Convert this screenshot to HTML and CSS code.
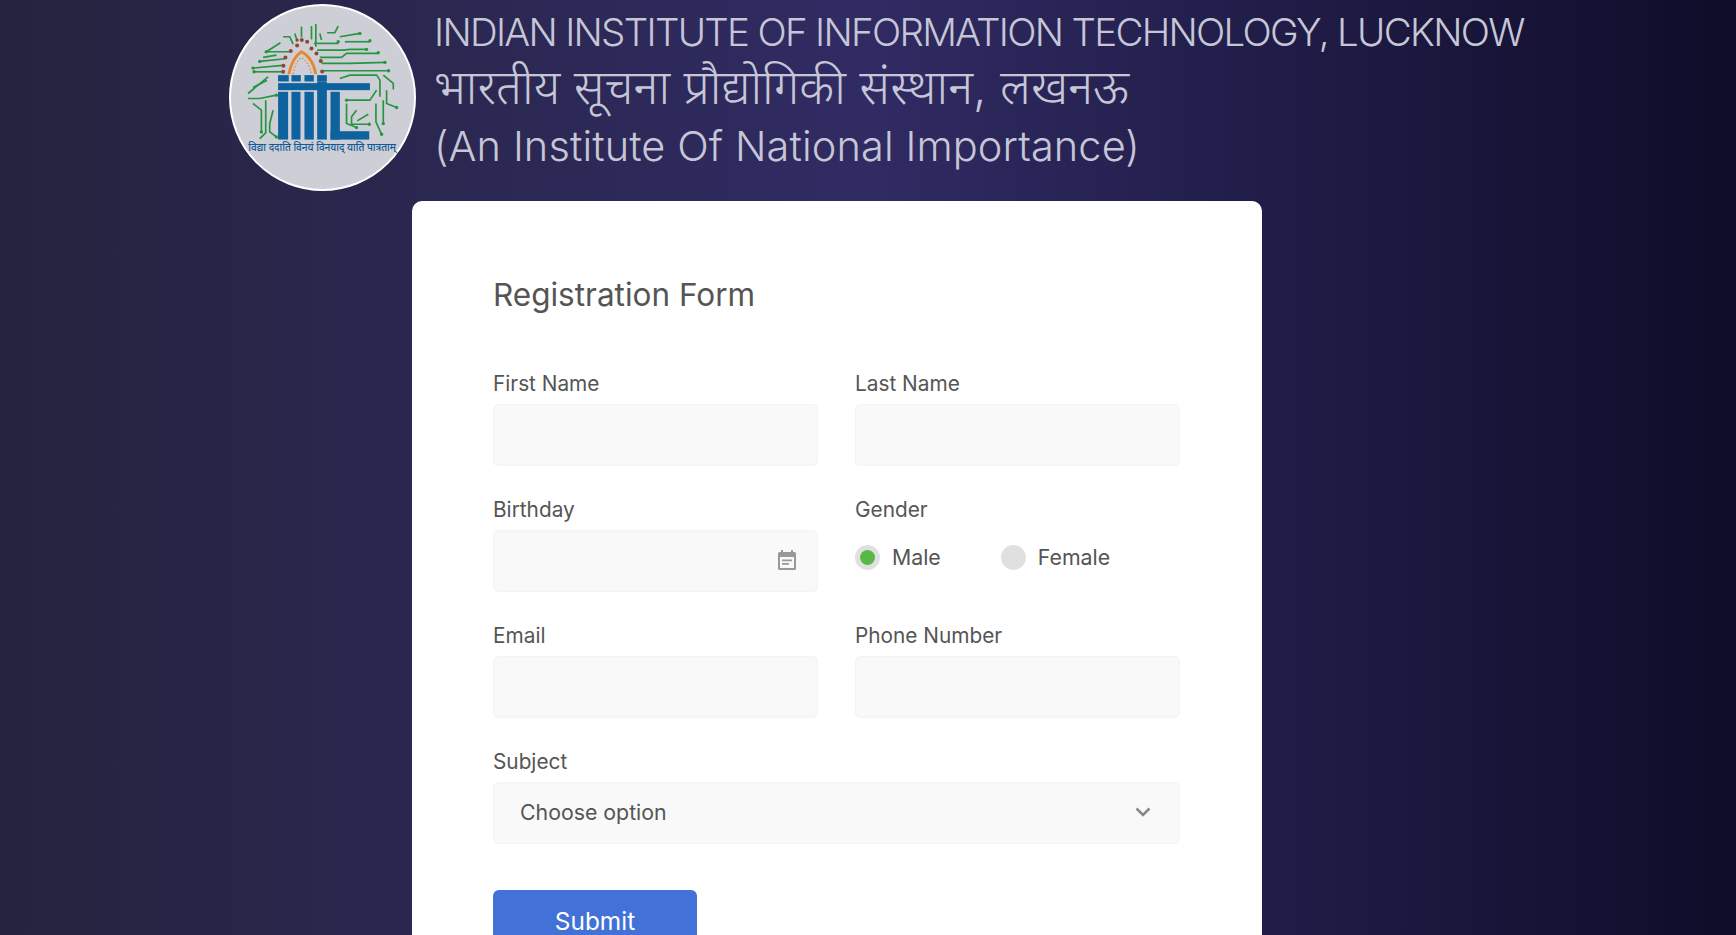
FILE: index.html
```html
<!DOCTYPE html>
<html lang="en">
<head>
    <meta charset="UTF-8">
    <meta name="viewport" content="width=device-width, initial-scale=1.0">
    <title>Registration Form</title>
    <link rel="stylesheet" href="styles.css">
</head>
<body>
    <header class="header">
        <svg class="logo" viewBox="58 12 560 560" aria-label="IIIT Lucknow logo">
            <circle cx="338" cy="292" r="277" fill="#cdced6" stroke="#fff" stroke-width="6"/>
            <!-- circuit traces -->
            <g class="traces">
                <path d="M340 212H536"/>
                <path d="M335 190H420L525 187"/>
                <path d="M330 172H395L410 160H505"/>
                <path d="M322 150H400L420 148H470"/>
                <path d="M312 130H385"/>
                <path d="M405 125H480"/>
                <path d="M390 110L450 100"/>
                <path d="M318 72V140"/>
                <path d="M330 100L335 120"/>
                <path d="M352 98H375L385 78"/>
                <path d="M220 215H133"/>
                <path d="M218 196L130 204"/>
                <path d="M226 176L150 184"/>
                <path d="M240 155H170L212 128"/>
                <path d="M200 165L160 172"/>
                <path d="M250 132L240 110H220"/>
                <path d="M275 80V112"/>
                <path d="M255 100L262 122"/>
                <path d="M305 78V118"/>
                <path d="M115 295H150L200 285"/>
                <path d="M115 280L175 230"/>
                <path d="M130 262L172 240"/>
                <path d="M130 310L155 330V395"/>
                <path d="M168 300V398L150 415"/>
                <path d="M190 330L180 370V395L200 410"/>
                <path d="M390 235L420 225H500L510 240V290"/>
                <path d="M520 225L550 250V268"/>
                <path d="M530 270V310L560 322"/>
                <path d="M410 300H480L500 270"/>
                <path d="M410 310V370L440 382"/>
                <path d="M440 330L425 350V372H478"/>
                <path d="M442 362L475 342"/>
                <path d="M498 310V365L515 402"/>
                <path d="M520 300V370"/>
            </g>
            <!-- trace end points -->
            <g class="trace-ends">
                <circle cx="536" cy="212" r="5"/><circle cx="525" cy="187" r="5"/><circle cx="505" cy="158" r="5"/>
                <circle cx="470" cy="148" r="5"/><circle cx="385" cy="125" r="5"/><circle cx="480" cy="122" r="5"/>
                <circle cx="450" cy="100" r="5"/><circle cx="133" cy="215" r="5"/><circle cx="130" cy="204" r="5"/>
                <circle cx="150" cy="184" r="5"/><circle cx="170" cy="155" r="5"/><circle cx="200" cy="285" r="5"/>
                <circle cx="155" cy="395" r="5"/><circle cx="200" cy="410" r="5"/><circle cx="440" cy="382" r="5"/>
                <circle cx="478" cy="372" r="5"/><circle cx="515" cy="402" r="5"/><circle cx="560" cy="322" r="5"/>
                <circle cx="410" cy="300" r="5"/><circle cx="520" cy="370" r="5"/>
            </g>
            <!-- arch -->
            <path d="M237 222C245 185 258 165 275 155C295 165 312 190 318 222" fill="none" stroke="#e8862c" stroke-width="8"/>
            <path d="M250 222C254 195 262 182 275 172C290 182 300 198 305 222" fill="none" stroke="#e8862c" stroke-width="4" stroke-dasharray="4 6"/>
            <g class="arch-dots">
                <circle cx="220" cy="215" r="6"/><circle cx="221" cy="197" r="6"/><circle cx="227" cy="172" r="6"/>
                <circle cx="243" cy="153" r="6"/><circle cx="262" cy="136" r="6"/><circle cx="276" cy="120" r="6"/>
                <circle cx="292" cy="125" r="6"/><circle cx="305" cy="145" r="6"/><circle cx="320" cy="160" r="6"/>
                <circle cx="333" cy="183" r="6"/><circle cx="337" cy="214" r="6"/><circle cx="262" cy="120" r="5"/>
            </g>
            <!-- iiitl letters -->
            <g class="letters">
                <rect x="205" y="225" width="32" height="19"/>
                <rect x="245" y="225" width="28" height="19"/>
                <rect x="284" y="225" width="28" height="19"/>
                <rect x="322" y="225" width="29" height="19"/>
                <rect x="205" y="249" width="275" height="21"/>
                <rect x="205" y="275" width="30" height="143"/>
                <rect x="245" y="275" width="27" height="143"/>
                <rect x="284" y="275" width="28" height="143"/>
                <rect x="322" y="244" width="29" height="174"/>
                <rect x="362" y="275" width="28" height="143"/>
                <rect x="362" y="393" width="116" height="25"/>
            </g>
            <text class="motto" x="116" y="452" textLength="442" lengthAdjust="spacingAndGlyphs">विद्या ददाति विनयं विनयाद् याति पात्रताम्</text>
        </svg>
        <div class="institute">
            <div class="line-en">INDIAN INSTITUTE OF INFORMATION TECHNOLOGY, LUCKNOW</div>
            <div class="line-hi">भारतीय सूचना प्रौद्योगिकी संस्थान, लखनऊ</div>
            <div class="line-sub">(An Institute Of National Importance)</div>
        </div>
    </header>

    <main class="card">
        <h2 class="card-title">Registration Form</h2>
        <form class="form-grid">
            <div class="form-group">
                <label for="firstName">First Name</label>
                <input type="text" id="firstName">
            </div>
            <div class="form-group">
                <label for="lastName">Last Name</label>
                <input type="text" id="lastName">
            </div>
            <div class="form-group">
                <label for="birthday">Birthday</label>
                <div class="date-field">
                    <input type="text" id="birthday">
                    <svg class="calendar" viewBox="0 0 18 20">
                        <path d="M3 0h2v2h8V0h2v2h1.500A1.500 1.500 0 0 1 18 3.500v15a1.500 1.500 0 0 1-1.500 1.500h-15A1.500 1.500 0 0 1 0 18.500v-15A1.500 1.500 0 0 1 1.500 2H3zM2 7v11h14V7zm2 2.500h10v1.700H4zm0 3.500h7v1.700H4z" fill-rule="evenodd"/>
                    </svg>
                </div>
            </div>
            <div class="form-group">
                <span class="label">Gender</span>
                <div class="radios">
                    <span class="radio-item"><span class="radio checked"></span>Male</span>
                    <span class="radio-item"><span class="radio"></span>Female</span>
                </div>
            </div>
            <div class="form-group">
                <label for="email">Email</label>
                <input type="text" id="email">
            </div>
            <div class="form-group">
                <label for="phone">Phone Number</label>
                <input type="text" id="phone">
            </div>
            <div class="form-group full">
                <label for="subject">Subject</label>
                <div class="select-field" id="subject">
                    Choose option
                    <svg class="chevron" viewBox="0 0 16 10"><path d="M1.500 1.500L8 8l6.500-6.500"/></svg>
                </div>
            </div>
            <div class="full">
                <button type="button" class="submit">Submit</button>
            </div>
        </form>
    </main>
</body>
</html>
```

FILE: styles.css
```css
html, body {
    height: 100%;
}
body {
    margin: 0;
    font-family: Inter, "Noto Sans", sans-serif;
    color: #555;
    background: linear-gradient(to right, #24243e, #302b63, #0f0c29);
    overflow: hidden;
}
.header {
    display: flex;
    align-items: flex-start;
    gap: 18px;
    height: 201px;
    padding: 4px 0 0 229px;
    box-sizing: border-box;
}
.logo {
    width: 187px;
    height: 187px;
    flex: none;
}
.traces path {
    fill: none;
    stroke: #23963f;
    stroke-width: 5;
}
.trace-ends circle {
    fill: #23963f;
}
.arch-dots circle {
    fill: #8a4a30;
}
.letters rect {
    fill: #0e639f;
}
.motto {
    font-family: "Noto Sans", sans-serif;
    font-size: 32px;
    font-weight: 500;
    fill: #0e5a98;
}
.institute {
    font-weight: 300;
    color: #c6c6d6;
    white-space: nowrap;
}
.line-en {
    font-size: 38.5px;
    line-height: 56px;
    letter-spacing: -1.7px;
}
.line-hi {
    font-size: 48px;
    line-height: 56px;
    margin-top: -1px;
}
.line-sub {
    font-size: 41.5px;
    line-height: 58px;
    letter-spacing: 0.1px;
    margin-top: 2px;
}
.card {
    width: 850px;
    margin-left: 412px;
    box-sizing: border-box;
    padding: 72px 82px 60px 81px;
    background: #fff;
    border-radius: 10px;
}
.card-title {
    margin: 0 0 51px;
    font-size: 31.5px;
    font-weight: 400;
    line-height: 44px;
    color: #555;
}
.form-grid {
    display: grid;
    grid-template-columns: 325px 325px;
    column-gap: 37px;
    row-gap: 28px;
}
.full {
    grid-column: 1 / 3;
}
label, .label {
    display: block;
    margin-bottom: 5px;
    font-size: 20.8px;
    line-height: 31px;
    color: #555;
}
input, .select-field {
    display: block;
    width: 100%;
    height: 62px;
    box-sizing: border-box;
    border: none;
    border-radius: 6px;
    background: #f9f9f9;
    box-shadow: inset 0 0 2px rgba(0, 0, 0, 0.08);
}
.date-field {
    position: relative;
}
.calendar {
    position: absolute;
    top: 20px;
    right: 22px;
    width: 18px;
    height: 20px;
    fill: #999;
}
.radios {
    display: flex;
    gap: 60px;
    padding-top: 15px;
}
.radio-item {
    display: flex;
    align-items: center;
    gap: 12px;
    font-size: 21.3px;
    line-height: 25px;
    color: #555;
}
.radio {
    display: flex;
    align-items: center;
    justify-content: center;
    width: 25px;
    height: 25px;
    border-radius: 50%;
    background: #e0e0e0;
}
.radio.checked::after {
    content: "";
    width: 15px;
    height: 15px;
    border-radius: 50%;
    background: #57b846;
}
.select-field {
    display: flex;
    align-items: center;
    justify-content: space-between;
    padding: 0 29px 2px 27px;
    font-size: 21.3px;
    color: #555;
}
.chevron {
    width: 16px;
    height: 10px;
    fill: none;
    stroke: #888;
    stroke-width: 2.5;
}
.submit {
    display: block;
    width: 204px;
    height: 62px;
    margin-top: 18px;
    border: none;
    border-radius: 6px;
    background: #4272d7;
    color: #fff;
    font-family: inherit;
    font-size: 24.4px;
}
```
